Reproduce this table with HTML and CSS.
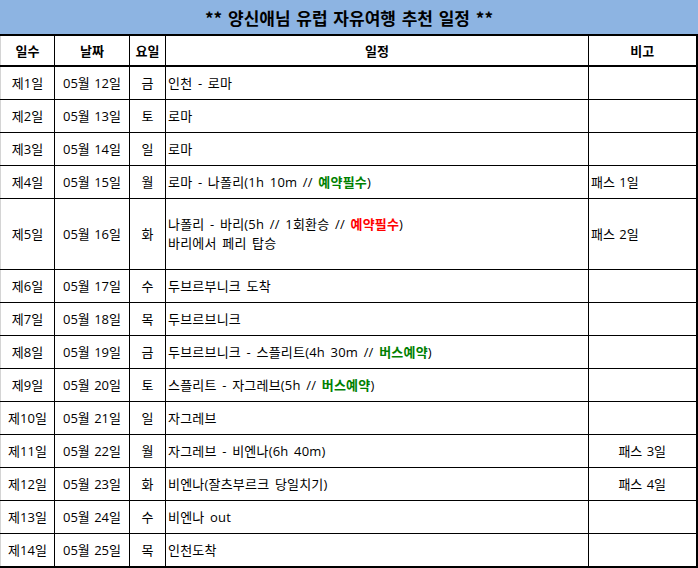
FILE: index.html
```html
<!DOCTYPE html>
<html lang="ko">
<head>
<meta charset="utf-8">
<title>양신애님 유럽 자유여행 추천 일정</title>
<link rel="stylesheet" href="styles.css">
</head>
<body>
<div class="sheet">
  <div class="title">** 양신애님 유럽 자유여행 추천 일정 **</div>
  <table class="plan">
    <colgroup>
      <col class="c-day"><col class="c-date"><col class="c-dow"><col class="c-plan"><col class="c-note">
    </colgroup>
    <thead>
      <tr class="head"><th>일수</th><th>날짜</th><th>요일</th><th>일정</th><th>비고</th></tr>
    </thead>
    <tbody>
      <tr><td class="ctr">제1일</td><td class="ctr">05월 12일</td><td class="ctr">금</td><td class="sched">인천 - 로마</td><td></td></tr>
      <tr><td class="ctr">제2일</td><td class="ctr">05월 13일</td><td class="ctr">토</td><td class="sched">로마</td><td></td></tr>
      <tr><td class="ctr">제3일</td><td class="ctr">05월 14일</td><td class="ctr">일</td><td class="sched">로마</td><td></td></tr>
      <tr><td class="ctr">제4일</td><td class="ctr">05월 15일</td><td class="ctr">월</td><td class="sched">로마 - 나폴리(1h 10m // <b class="green">예약필수</b>)</td><td>패스 1일</td></tr>
      <tr class="tall"><td class="ctr">제5일</td><td class="ctr">05월 16일</td><td class="ctr">화</td><td class="sched">나폴리 - 바리(5h // 1회환승 // <b class="red">예약필수</b>)<br>바리에서 페리 탑승</td><td>패스 2일</td></tr>
      <tr><td class="ctr">제6일</td><td class="ctr">05월 17일</td><td class="ctr">수</td><td class="sched">두브르부니크 도착</td><td></td></tr>
      <tr><td class="ctr">제7일</td><td class="ctr">05월 18일</td><td class="ctr">목</td><td class="sched">두브르브니크</td><td></td></tr>
      <tr><td class="ctr">제8일</td><td class="ctr">05월 19일</td><td class="ctr">금</td><td class="sched">두브르브니크 - 스플리트(4h 30m // <b class="green">버스예약</b>)</td><td></td></tr>
      <tr><td class="ctr">제9일</td><td class="ctr">05월 20일</td><td class="ctr">토</td><td class="sched">스플리트 - 자그레브(5h // <b class="green">버스예약</b>)</td><td></td></tr>
      <tr><td class="ctr">제10일</td><td class="ctr">05월 21일</td><td class="ctr">일</td><td class="sched">자그레브</td><td></td></tr>
      <tr><td class="ctr">제11일</td><td class="ctr">05월 22일</td><td class="ctr">월</td><td class="sched">자그레브 - 비엔나(6h 40m)</td><td class="ctr">패스 3일</td></tr>
      <tr><td class="ctr">제12일</td><td class="ctr">05월 23일</td><td class="ctr">화</td><td class="sched">비엔나(잘츠부르크 당일치기)</td><td class="ctr">패스 4일</td></tr>
      <tr><td class="ctr">제13일</td><td class="ctr">05월 24일</td><td class="ctr">수</td><td class="sched">비엔나 out</td><td></td></tr>
      <tr><td class="ctr">제14일</td><td class="ctr">05월 25일</td><td class="ctr">목</td><td class="sched">인천도착</td><td></td></tr>
    </tbody>
  </table>
</div>
</body>
</html>
```

FILE: styles.css
```css
html, body {
  margin: 0;
  padding: 0;
  background: #ffffff;
}

body {
  font-family: "Open Sans", "Noto Sans CJK KR", sans-serif;
  font-size: 13px;
  color: #000000;
}

.sheet {
  width: 698px;
}

.title {
  height: 34px;
  background: #8db4e2;
  font-family: "Noto Sans CJK KR", sans-serif;
  font-size: 17px;
  font-weight: bold;
  word-spacing: 1px;
  display: flex;
  align-items: center;
  justify-content: center;
}

.plan {
  width: 696px;
  border-collapse: collapse;
  table-layout: fixed;
  border-top: 2px solid #000;
  border-right: 2px solid #000;
  border-bottom: 2px solid #000;
  border-left: 1px solid #d4d4d4;
}

.c-day { width: 54px; }
.c-date { width: 75px; }
.c-dow { width: 36px; }
.c-plan { width: 423px; }
.c-note { width: 108px; }

.plan th,
.plan td {
  border: 1px solid #000;
  padding: 0 2px;
  height: 32px;
  line-height: 19px;
  vertical-align: middle;
  text-align: left;
  white-space: nowrap;
  font-weight: normal;
  word-spacing: 1px;
}

.plan td.sched {
  word-spacing: 2px;
  letter-spacing: 0.2px;
}

.plan th:first-child,
.plan td:first-child {
  border-left: 1px solid #d4d4d4;
}

.plan th:last-child,
.plan td:last-child {
  border-right: 2px solid #000;
}

.plan .head th {
  font-family: "Noto Sans CJK KR", sans-serif;
  font-weight: bold;
  text-align: center;
  height: 29px;
  border-bottom: 2px solid #000;
  border-top: 2px solid #000;
}

.plan td.ctr {
  text-align: center;
}

.plan tr.tall td {
  height: 70px;
}

.plan tbody tr:last-child td {
  border-bottom: 2px solid #000;
}

.green {
  color: #008000;
  font-weight: bold;
}

.red {
  color: #ff0000;
  font-weight: bold;
}
```
